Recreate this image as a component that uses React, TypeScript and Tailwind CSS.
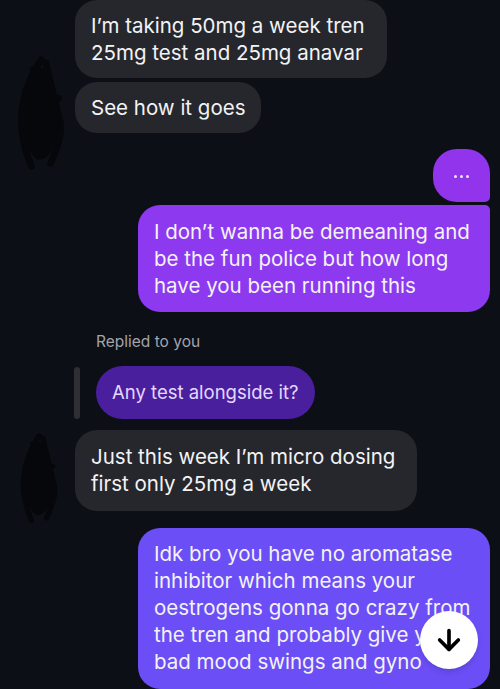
import { ArrowDown } from "lucide-react";

const font = { fontFamily: "Inter, 'Noto Sans', sans-serif" };

function Scribble({ className }: { className: string }) {
    return <svg className={className} viewBox="0 0 60 120" fill="none">
        <path d="M30 5 C20 20 12 40 10 60 C8 80 14 100 20 115 M35 8 C40 30 45 50 50 70 C52 85 45 100 40 112 M22 15 C30 40 28 70 35 100 M15 40 C25 45 40 50 48 45 M12 70 C25 75 40 80 50 78 M18 95 C28 92 38 98 45 90"
            stroke="#06070b" strokeWidth="7" strokeLinecap="round" />
        <path d="M28 12 C42 18 50 45 48 70 C46 95 38 110 26 108 C14 100 12 75 14 50 C16 30 20 15 28 12 Z" fill="#06070b" />
    </svg>
}

export default function App() {
    return <div className="w-[500px] h-[689px] overflow-hidden bg-[#0c0f16] text-[#f3f3f5] relative" style={font}>
        <div className="flex flex-col">
            <div className="relative flex flex-col items-start gap-[4px] pl-[75px]">
                <Scribble className="absolute left-[12px] top-[52px] w-[58px] h-[122px]" />
                <div className="bg-[#26272d] rounded-[22px] pl-[16px] pr-[22px] py-[12px] text-[20.5px] leading-[27px] whitespace-nowrap">
                    I’m taking 50mg a week tren<br />25mg test and 25mg anavar
                </div>
                <div className="bg-[#26272d] rounded-[22px] px-[16px] py-[12px] text-[20.5px] leading-[27px]">
                    See how it goes
                </div>
            </div>

            <div className="flex flex-col items-end gap-[3px] pr-[10px] mt-[16px]">
                <div className="bg-[#9234ec] w-[57px] h-[53px] rounded-[24px] rounded-br-[5px] flex items-center justify-center gap-[3px] pt-[2px]">
                    <span className="w-[3px] h-[3px] rounded-full bg-[#efe6ff]" />
                    <span className="w-[3px] h-[3px] rounded-full bg-[#efe6ff]" />
                    <span className="w-[3px] h-[3px] rounded-full bg-[#efe6ff]" />
                </div>
                <div className="bg-[#8d39f0] w-[352px] rounded-[22px] rounded-tr-[5px] pl-[16px] pr-[10px] py-[13px] text-[20.5px] leading-[27px] whitespace-nowrap">
                    I don’t wanna be demeaning and<br />be the fun police but how long<br />have you been running this
                </div>
            </div>

            <div className="pl-[96px] mt-[20px] text-[15.5px] leading-[20px] text-[#a2a4ab]">Replied to you</div>

            <div className="flex items-center gap-[16px] pl-[74px] mt-[14px]">
                <div className="w-[6px] h-[52px] rounded-full bg-[#2d2f35]" />
                <div className="bg-[#4a1f9e] text-[#e3d9ff] rounded-full px-[16px] h-[53px] flex items-center text-[18.5px]">
                    Any test alongside it?
                </div>
            </div>

            <div className="relative flex items-start pl-[75px] mt-[11px]">
                <Scribble className="absolute left-[8px] top-[2px] w-[62px] h-[92px]" />
                <div className="bg-[#26272d] rounded-[22px] pl-[16px] pr-[22px] pt-[13px] pb-[14px] text-[20.5px] leading-[27px] whitespace-nowrap">
                    Just this week I’m micro dosing<br />first only 25mg a week
                </div>
            </div>

            <div className="flex justify-end pr-[10px] mt-[17px]">
                <div className="bg-[#6b4ef5] w-[352px] rounded-[22px] pl-[16px] pr-[8px] pt-[12px] pb-[14px] text-[20.5px] leading-[27px] whitespace-nowrap">
                    Idk bro you have no aromatase<br />inhibitor which means your<br />oestrogens gonna go crazy from<br />the tren and probably give you<br />bad mood swings and gyno
                </div>
            </div>
        </div>

        <div className="absolute left-[420px] top-[611px] w-[58px] h-[58px] rounded-full bg-white flex items-center justify-center shadow-md">
            <ArrowDown size={32} strokeWidth={2.75} color="#000" />
        </div>
    </div>
}
